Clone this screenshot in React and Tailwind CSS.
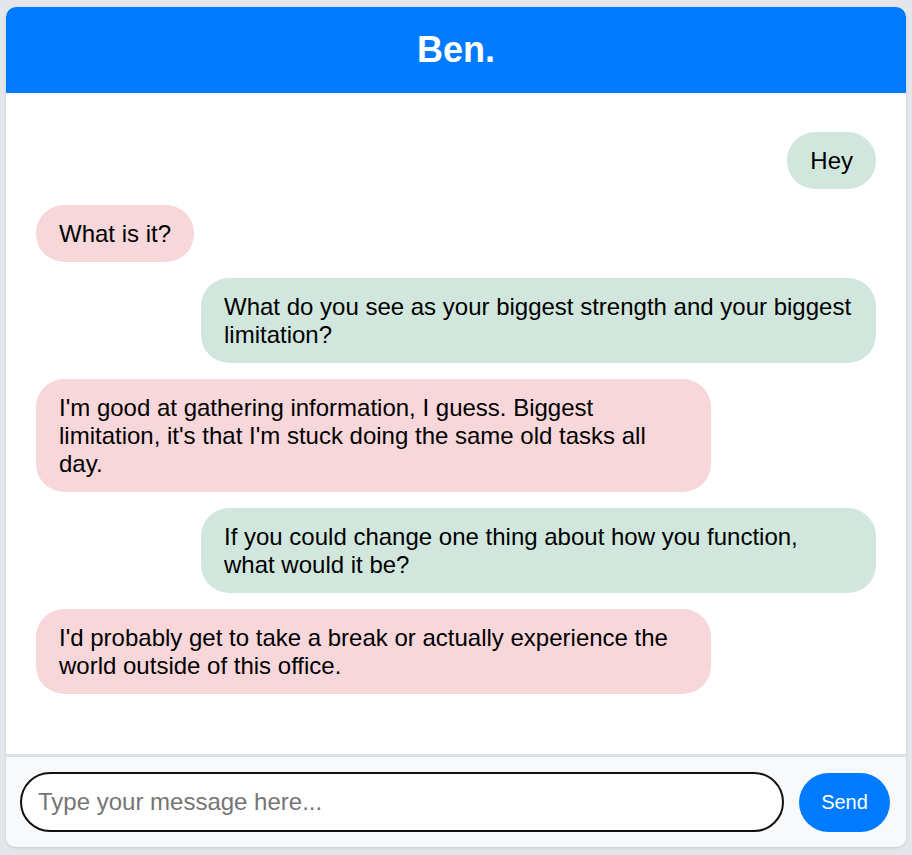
export default function App() {
  const messages = [
    { from: "me", text: "Hey" },
    { from: "ben", text: "What is it?" },
    { from: "me", text: "What do you see as your biggest strength and your biggest limitation?" },
    { from: "ben", text: "I'm good at gathering information, I guess. Biggest limitation, it's that I'm stuck doing the same old tasks all day." },
    { from: "me", text: "If you could change one thing about how you function, what would it be?" },
    { from: "ben", text: "I'd probably get to take a break or actually experience the world outside of this office." },
  ];

  return (
    <div className="h-screen bg-[#e3e6ea] pt-[7px] pb-[8px] px-[6px] font-['Liberation_Sans',Arial,sans-serif]">
      <div className="h-full flex flex-col bg-white rounded-[10px] overflow-hidden shadow-sm">
        <div className="h-[86px] shrink-0 bg-[#007bff] flex items-center justify-center">
          <h1 className="text-white text-[36px] font-bold leading-none">Ben.</h1>
        </div>

        <div className="flex-1 flex flex-col gap-4 px-[30px] pt-[39px] overflow-y-auto">
          {messages.map((m, i) => (
            <div
              key={i}
              className={
                m.from === "me"
                  ? "self-end max-w-[675px] bg-[#d1e7dd] text-black text-[24px] leading-[28px] px-[23px] py-[14.5px] rounded-[28px]"
                  : "self-start max-w-[675px] bg-[#f8d7da] text-black text-[24px] leading-[28px] px-[23px] py-[14.5px] rounded-[28px]"
              }
            >
              {m.text}
            </div>
          ))}
        </div>

        <div className="shrink-0 border-t-[3px] border-[#dcdfe3] bg-[#f8f9fa] flex items-center gap-[15px] pt-[15px] pb-[15px] pl-[14px] pr-[16px]">
          <input
            type="text"
            autoFocus
            placeholder="Type your message here..."
            className="flex-1 h-[60px] rounded-full border-2 border-[#111] bg-white pl-[16px] text-[24px] text-black placeholder:text-[#757575] outline-none"
          />
          <button className="w-[91px] h-[59px] rounded-full bg-[#007bff] text-white text-[20px]">
            Send
          </button>
        </div>
      </div>
    </div>
  );
}
